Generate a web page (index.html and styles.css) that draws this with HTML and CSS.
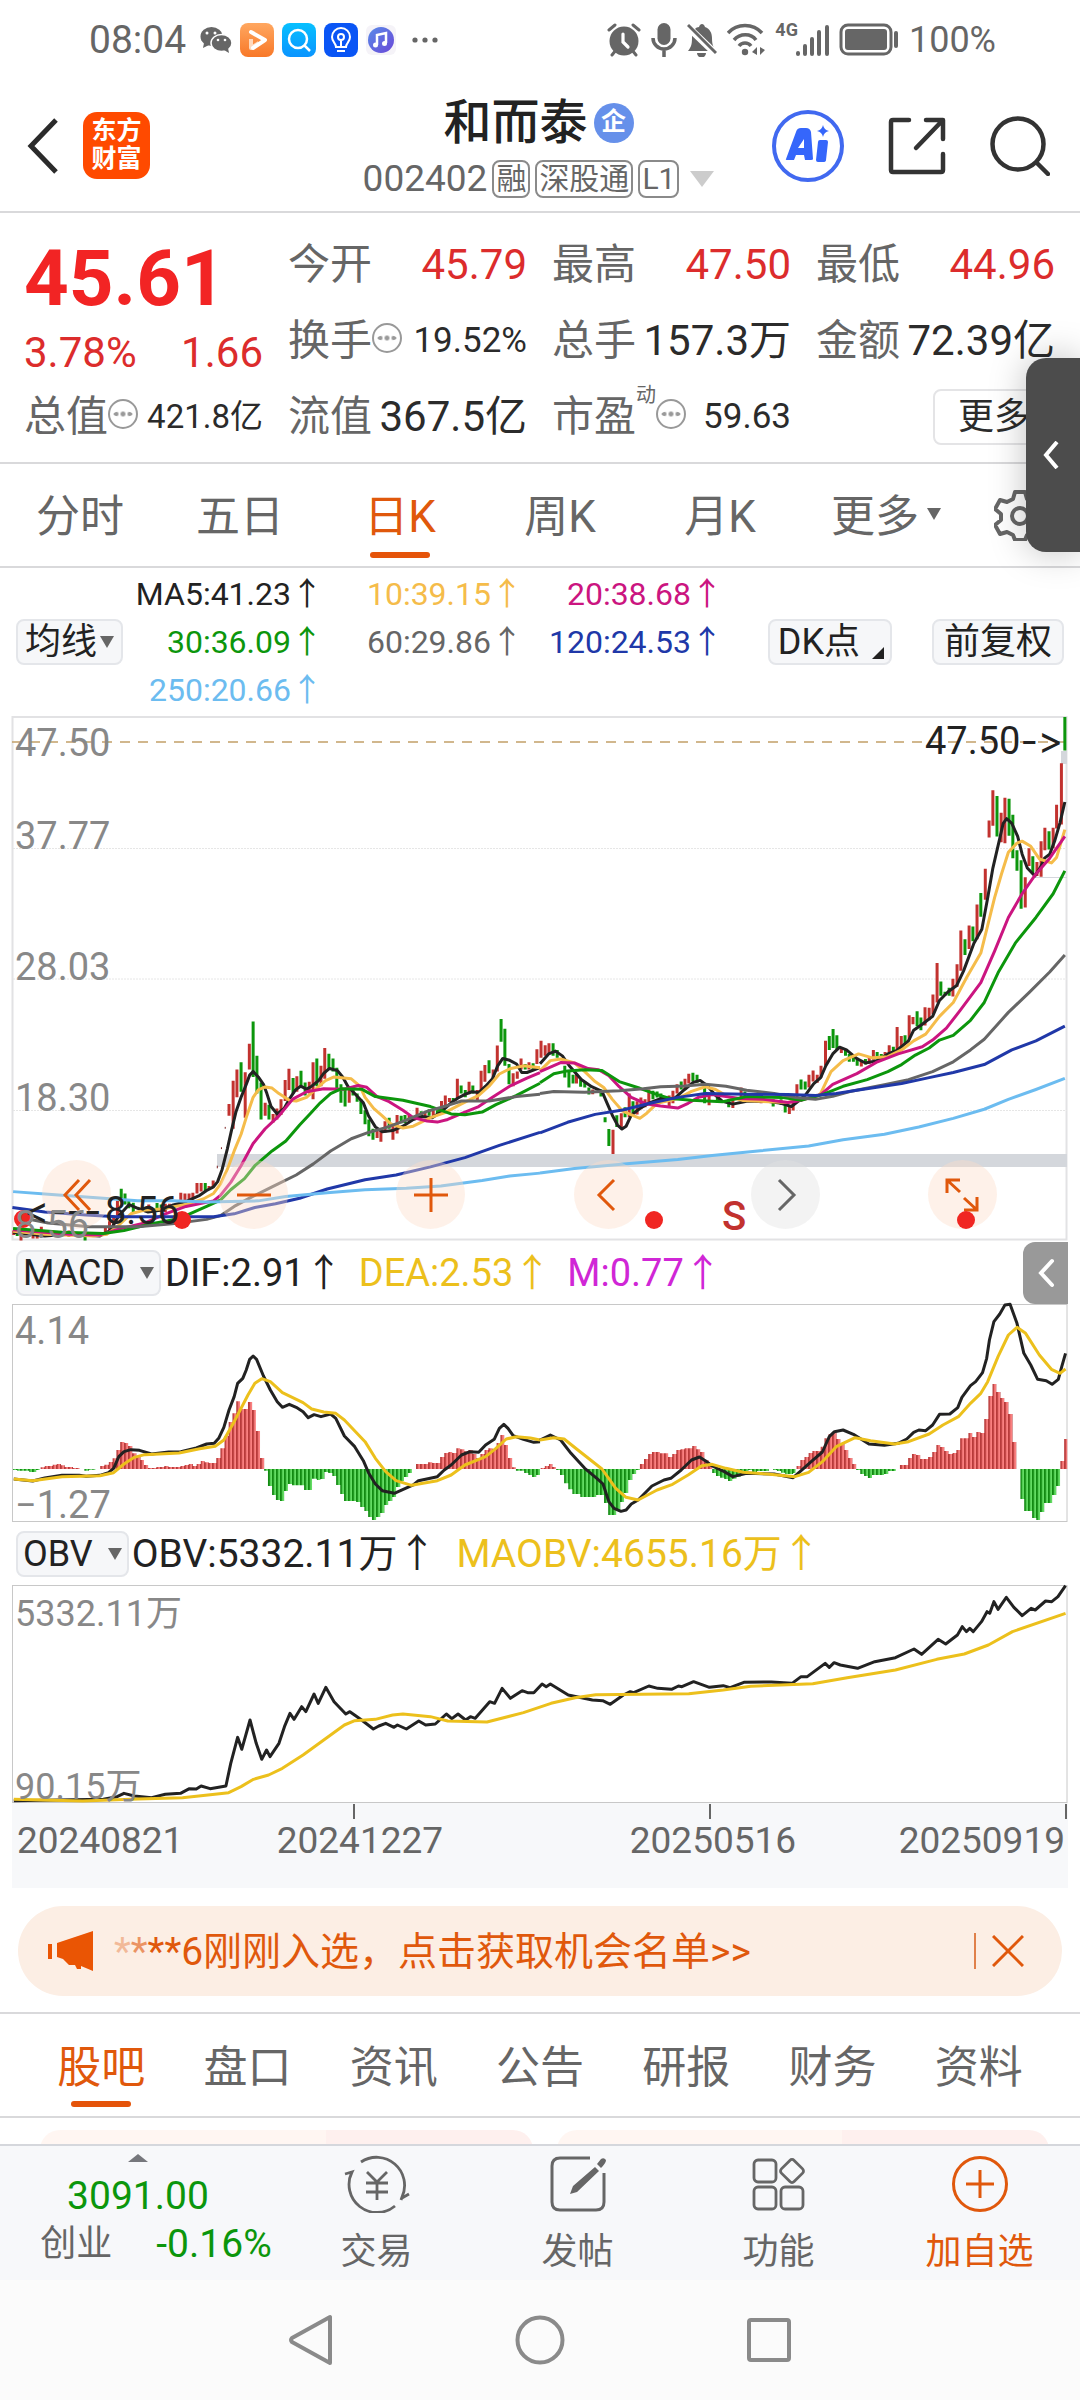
FILE: index.html
```html
<!DOCTYPE html>
<html lang="zh-CN">
<head>
<meta charset="utf-8">
<meta name="viewport" content="width=device-width, initial-scale=1">
<title>和而泰 002402</title>
<link rel="stylesheet" href="styles.css">
</head>
<body>
<div class="status">
  <div class="status__group">
    <span class="status__time">08:04</span>
    <svg width="32" height="36" viewBox="0 0 32 36"><ellipse cx="11.500" cy="14.500" rx="11" ry="9.500" fill="#666"/><path d="M4 21l-1 5 6-3z" fill="#666"/><ellipse cx="21.500" cy="21" rx="10.500" ry="8.500" fill="#666" stroke="#fff" stroke-width="1.500"/><path d="M24 28l5 3-1-5z" fill="#666"/><g fill="#fff"><circle cx="7" cy="11" r="1.500"/><circle cx="15" cy="11" r="1.500"/><circle cx="18" cy="18" r="1.300"/><circle cx="25" cy="18" r="1.300"/></g></svg>
    <svg width="34" height="34" viewBox="0 0 34 34"><defs><linearGradient id="or" x2="0" y2="1"><stop stop-color="#ffa760"/><stop offset="1" stop-color="#f87828"/></linearGradient></defs><rect width="34" height="34" rx="8" fill="url(#or)"/><path d="M11 16v9l8-5" stroke="#ffd9bd" stroke-width="4" fill="none" stroke-linejoin="round"/><path d="M11 9l14 8-12 8" fill="none" stroke="#fff" stroke-width="4" stroke-linejoin="round" stroke-linecap="round"/></svg>
    <svg width="34" height="34" viewBox="0 0 34 34"><defs><linearGradient id="cy" x2="0" y2="1"><stop stop-color="#07c0ff"/><stop offset="1" stop-color="#0a94ff"/></linearGradient></defs><rect width="34" height="34" rx="8" fill="url(#cy)"/><circle cx="16" cy="16" r="9" fill="none" stroke="#fff" stroke-width="2.500"/><path d="M22 22l6 6" stroke="#fff" stroke-width="2.500"/></svg>
    <svg width="34" height="34" viewBox="0 0 34 34"><rect width="34" height="34" rx="8" fill="#0a55f5"/><path d="M12 24c0-4-4-5-4-10a9 9 0 0 1 18 0c0 5-4 6-4 10zM13 28h8M17 24v-7M14 14a3 3 0 1 0 6 0 3 3 0 1 0-6 0" fill="none" stroke="#fff" stroke-width="2"/></svg>
    <svg class="status__music" width="30" height="30" viewBox="0 0 30 30"><defs><linearGradient id="mu" x2="1" y2="1"><stop stop-color="#5a8be8"/><stop offset="1" stop-color="#6a48d8"/></linearGradient></defs><rect width="30" height="30" rx="6" fill="#f5f3f8"/><circle cx="15" cy="15" r="13" fill="url(#mu)"/><path d="M11 20V10l9-2v10" fill="none" stroke="#fff" stroke-width="2.500"/><circle cx="9.500" cy="20" r="2.500" fill="#fff"/><circle cx="18.500" cy="18.500" r="2.500" fill="#fff"/></svg>
    <svg class="status__dots" width="26" height="8" viewBox="0 0 26 8" fill="#666"><circle cx="3" cy="4" r="2.600"/><circle cx="13" cy="4" r="2.600"/><circle cx="23" cy="4" r="2.600"/></svg>
  </div>
  <div class="status__group status__group--right">
    <svg width="34" height="34" viewBox="0 0 34 34"><circle cx="17" cy="18" r="14.500" fill="#666"/><path d="M2 7l6-5M32 7l-6-5M5 32l4-5M29 32l-4-5" stroke="#666" stroke-width="3" stroke-linecap="round"/><path d="M16 11v8l5 5" fill="none" stroke="#fff" stroke-width="3.200" stroke-linecap="round"/></svg>
    <svg width="26" height="36" viewBox="0 0 26 36"><rect x="6.500" y="1" width="13" height="22" rx="6.500" fill="#666"/><path d="M2 16a11 11 0 0 0 22 0M13 27v8" fill="none" stroke="#666" stroke-width="3.500"/></svg>
    <svg width="30" height="34" viewBox="0 0 30 34"><path d="M1 28c4-5 4-8 4-15 1-6 4-9 7-9 1-4 5-4 6 0 5 2 7 6 7 11 0 6 1 9 4 13z" fill="#666"/><path d="M1 4l28 27" stroke="#fff" stroke-width="7"/><path d="M1 2l28 28" stroke="#666" stroke-width="3"/><path d="M10 30h9a4 4 0 0 1-9 0" fill="#666"/></svg>
    <svg width="38" height="34" viewBox="0 0 38 34"><path d="M1 10c9-10 25-10 34 0M7 17c6-7 17-7 22 0M12 23c3-4 9-4 12 0" fill="none" stroke="#666" stroke-width="3.500"/><circle cx="18" cy="29" r="3.200" fill="#666"/><path d="M25 29l5-5v8M33 24v8l5-5z" fill="#666"/></svg>
    <span class="status__net">4G</span>
    <svg class="status__bars" width="33" height="34" viewBox="0 0 33 34" stroke="#666" stroke-width="4" stroke-linecap="round"><path d="M2 30v1M9 23v8M16 16v15M23 9v22M31 4v27"/></svg>
    <svg width="60" height="34" viewBox="0 0 60 34"><rect x="2" y="2" width="50" height="29" rx="7" fill="none" stroke="#666" stroke-width="3"/><rect x="6" y="6" width="42" height="21" rx="3" fill="#666"/><path d="M57 10v13" stroke="#666" stroke-width="4" stroke-linecap="round"/></svg>
    <span class="status__batt">100%</span>
  </div>
</div>

<header class="top">
  <div class="top__left">
    <button class="icon-btn" aria-label="返回"><svg width="32" height="56" viewBox="0 0 32 56"><path d="M29 2L4 28l25 26" fill="none" stroke="#2b2b2b" stroke-width="5"/></svg></button>
    <a class="brand" href="#">东方<br>财富</a>
  </div>
  <div class="top__mid">
    <h1 class="top__name">和而泰<span class="top__badge">企</span></h1>
    <div class="top__code"><span>002402</span><span class="tag">融</span><span class="tag">深股通</span><span class="tag">L1</span><svg class="top__tri" width="24" height="16" viewBox="0 0 24 16"><path d="M0 0h24L12 16z" fill="#ccc"/></svg></div>
  </div>
  <div class="top__right">
    <button class="icon-btn" aria-label="Ai"><svg width="72" height="72" viewBox="0 0 72 72"><circle cx="36" cy="36" r="34" fill="none" stroke="#4169f0" stroke-width="4"/><g fill="#3566fb"><path fill-rule="evenodd" d="M14 49l10-27q1-4 5-4h5q4 0 5 4l2 27q0 1-2 1h-6l-1-5h-8l-2 5h-7q-2 0-1-1zM26 38h6v-9z"/><path d="M46 32q0-2 2-2h6q2 0 2 2l-2 18q0 2-3 2h-5q-2 0-2-2zM51 15q1 5 6 6-5 1-6 6-1-5-6-6 5-1 6-6z"/></g></svg></button>
    <button class="icon-btn" aria-label="分享"><svg width="58" height="58" viewBox="0 0 58 58" fill="none" stroke="#333" stroke-width="4.500" stroke-linecap="round" stroke-linejoin="round"><path d="M21 3H5q-2 0-2 2v48q0 2 2 2h48q2 0 2-2V37M38 3h17v19M54 4L28 31"/></svg></button>
    <button class="icon-btn" aria-label="搜索"><svg width="60" height="60" viewBox="0 0 60 60" fill="none" stroke="#333" stroke-width="4.500" stroke-linecap="round"><circle cx="28" cy="28" r="25.500"/><path d="M47 47l11 11"/></svg></button>
  </div>
</header>

<section class="quote">
  <div class="quote__main">
    <div class="quote__price">45.61</div>
    <div class="quote__chg"><span>3.78%</span><span>1.66</span></div>
  </div>
  <div class="q"><span>今开</span><b class="up">45.79</b></div>
  <div class="q"><span>最高</span><b class="up">47.50</b></div>
  <div class="q"><span>最低</span><b class="up">44.96</b></div>
  <div class="q"><span>换手<i class="more"></i></span><b class="mid">19.52%</b></div>
  <div class="q"><span>总手</span><b>157.3万</b></div>
  <div class="q"><span>金额</span><b>72.39亿</b></div>
  <div class="q"><span>总值<i class="more"></i></span><b class="small">421.8亿</b></div>
  <div class="q"><span>流值</span><b>367.5亿</b></div>
  <div class="q"><span>市盈<sup>动</sup><i class="more"></i></span><b class="mid">59.63</b></div>
  <div class="q q--end"><button class="quote__more">更多</button></div>
</section>

<nav class="periods">
  <a href="#">分时</a><a href="#">五日</a><a href="#" class="on">日K</a><a href="#">周K</a><a href="#">月K</a>
  <a href="#" class="periods__more">更多<svg class="tri" width="14" height="12" viewBox="0 0 14 12"><path d="M0 0h14L7 12z" fill="#666"/></svg></a>
  <button class="icon-btn" aria-label="设置"><svg width="52" height="52" viewBox="0 0 52 52" fill="none" stroke="#666" stroke-width="4" stroke-linejoin="round"><path d="M21 3h10l2 7 6 3 7-2 5 9-6 5v6l6 5-5 9-7-2-6 3-2 5H21l-2-5-6-3-7 2-5-9 6-5v-6l-6-5 5-9 7 2 6-3z"/><circle cx="26" cy="27" r="8"/></svg></button>
</nav>
<aside class="drawer"><button class="icon-btn" aria-label="展开"><svg width="18" height="28" viewBox="0 0 18 28"><path d="M15 1L4 14l11 13" fill="none" stroke="#fff" stroke-width="4"/></svg></button></aside>

<section class="ma">
  <button class="chip chip--ma">均线<svg width="14" height="12" viewBox="0 0 14 12"><path d="M0 0h14L7 12z" fill="#666"/></svg></button>
  <ul class="ma__list">
    <li class="c-black">MA5:41.23<i>↑</i></li><li class="c-orange">10:39.15<i>↑</i></li><li class="c-pink">20:38.68<i>↑</i></li>
    <li class="c-green">30:36.09<i>↑</i></li><li class="c-gray">60:29.86<i>↑</i></li><li class="c-blue">120:24.53<i>↑</i></li>
    <li class="c-sky">250:20.66<i>↑</i></li>
  </ul>
  <button class="chip chip--dk">DK点<svg width="12" height="12" viewBox="0 0 12 12"><path d="M12 0v12H0z" fill="#222"/></svg></button>
  <button class="chip chip--fq">前复权</button>
</section>

<figure class="chart">
  <svg class="chart__svg" viewBox="12 716 1056 525">
    <rect x="12.500" y="717" width="1054" height="522.500" fill="none" stroke="#e2e2e4" stroke-width="2"/>
    <path d="M13 848.500H1067M13 979H1067M13 1110.500H1067" stroke="#e6e6e6" stroke-dasharray="2 1"/>
    <path d="M1033 877.500H1067" stroke="#d4d7dc"/>
    <path d="M217 1154H1067V1167H217zM1061 751h6v13h-6z" fill="#d4d7dc"/>
    <path d="M12 742H1067" stroke="#c2a068" stroke-width="1.500" stroke-dasharray="10 8"/>
    <g class="axis"><text x="15" y="756">47.50</text><text x="15" y="849">37.77</text><text x="15" y="980">28.03</text><text x="15" y="1111">18.30</text></g>
    <g class="candles" transform="translate(0 720) scale(.34439 .3699)">
      <path class="r" d="M40 1380V1392M61 1375V1407M96 1385V1402M108 1385V1402M120 1370V1395M200 1380V1397M212 1385V1393M306 1370V1390M318 1355V1385M330 1340V1375M341 1300V1340M432 1310V1330M480 1308V1330M492 1308V1320M525 1278V1300M537 1280V1300M549 1280V1298M560 1278V1292M572 1252V1280M584 1252V1275M607 1260V1268M619 1245V1262M665 1038V1070M677 975V1105M688 945V1020M712 952V1075M724 875V945M770 1035V1070M793 1065V1088M804 1050V1080M816 1025V1068M828 973V1030M839 943V1000M862 963V1005M898 978V1010M909 925V1025M932 935V990M943 887V970M1014 1000V1035M1095 1105V1130M1106 1110V1140M1118 1085V1115M1141 1095V1135M1153 1068V1118M1188 1065V1085M1211 1048V1080M1234 1060V1072M1258 1055V1075M1282 1030V1060M1293 1015V1045M1305 1022V1033M1328 970V1022M1362 978V1012M1386 1000V1030M1397 948V1005M1408 933V978M1432 945V970M1444 880V950M1490 955V990M1502 950V970M1513 915V945M1536 925V945M1559 890V930"/>
      <path class="g" d="M50 1385V1395M73 1380V1395M247 1385V1407M352 1267V1300M363 1280V1310M374 1298V1320M387 1305V1335M456 1306V1320M468 1310V1325M596 1252V1275M700 925V1005M735 815V965M746 908V1010M758 980V1080M781 1040V1080M851 968V1010M874 948V990M886 980V1015M920 915V990M955 902V945M967 915V950M978 940V1005M990 985V1035M1002 1000V1045M1025 990V1015M1037 1010V1032M1048 1025V1065M1060 1055V1093M1071 1080V1125M1083 1105V1135M1130 1075V1105M1165 1070V1090M1176 1068V1090M1223 1058V1070M1246 1052V1070M1270 1055V1070M1316 1022V1032M1339 988V1010M1351 1000V1020M1373 988V1010M1420 920V955M1455 808V870M1466 835V935M1478 930V985M1525 930V945M1548 928V948"/>
      <path class="thin" d="M631 1205V1212M643 1155V1160M654 1100V1105"/>
    </g>
    <g class="candles" transform="translate(540 700) scale(.34439 .39541)">
      <path class="r" d="M3 862V905M15 873V900M26 868V895M106 945V970M153 985V997M212 1087V1148M236 1045V1085M259 995V1055M282 1015V1048M293 1005V1035M305 1010V1030M316 985V1020M375 1000V1030M386 988V1020M398 972V995M421 958V985M432 945V970M491 1000V1025M560 1012V1032M584 980V1012M630 1000V1018M642 1000V1020M724 1025V1047M735 1015V1038M746 972V1005M781 948V980M793 937V965M805 948V968M816 925V955M829 862V925M875 880V893M933 912V927M956 905V920M968 885V910M1002 890V905M1014 873V895M1037 827V890M1049 850V880M1072 797V860M1083 802V820M1118 777V823M1130 778V810M1141 745V795M1153 665V765M1199 705V750M1211 668V725M1222 583V685M1246 570V630M1269 517V605M1293 427V505M1304 305V348M1315 228V318M1339 285V360M1350 247V362M1409 448V525M1420 375V420M1443 410V445M1455 357V447M1466 323V380M1490 323V375M1500 265V325M1514 160V315"/>
      <path class="g" d="M38 868V900M50 885V905M72 925V955M84 940V980M96 948V970M118 960V978M130 965V980M142 980V998M177 985V1003M189 1055V1068M200 1085V1128M223 1050V1080M247 1030V1055M270 1015V1045M328 988V1010M340 990V1005M351 995V1010M410 965V985M444 943V965M456 948V968M478 975V1020M515 1000V1018M548 1010V1030M595 990V1010M607 1000V1014M677 1010V1028M700 1010V1024M712 1020V1043M758 960V985M770 965V985M840 850V885M851 832V880M862 848V885M887 885V900M898 895V915M910 905V915M921 905V925M945 908V922M979 890V910M991 895V905M1026 877V895M1060 848V870M1095 787V825M1106 803V835M1164 712V748M1176 738V748M1188 728V748M1234 605V645M1257 573V610M1280 488V548M1327 243V345M1362 250V343M1373 290V400M1385 380V432M1397 405V528M1431 395V440M1478 332V378M1524 43V128"/>
    </g>
    <g class="lines" transform="translate(0 720) scale(.34439 .3699)">
      <polyline stroke="#222" points="38,1385 130,1395 200,1390 290,1395 320,1380 345,1340 375,1310 400,1320 430,1330 470,1325 500,1312 540,1302 580,1285 600,1272 620,1262 632,1248 645,1215 660,1160 672,1110 685,1060 700,1020 715,985 725,960 735,950 750,965 765,985 775,1010 787,1045 805,1065 825,1050 840,1025 858,1000 873,990 890,998 905,990 925,975 940,955 957,942 980,948 995,965 1010,990 1030,1010 1055,1035 1070,1070 1090,1100 1110,1113 1140,1110 1170,1098 1200,1080 1225,1072 1255,1075 1280,1060 1310,1035 1330,1022 1350,1012 1370,1005 1390,1007 1410,990 1430,970 1445,935 1460,915 1480,920 1500,930 1515,953 1530,953 1568,940"/>
      <polyline stroke="#f5bc4a" points="38,1382 130,1390 270,1395 310,1390 340,1370 380,1335 420,1325 470,1322 540,1310 590,1295 620,1280 640,1255 660,1215 680,1165 700,1120 715,1075 735,1020 750,1000 770,992 790,995 810,1010 840,1028 860,1030 890,1020 920,995 945,975 970,965 1020,970 1045,990 1060,1020 1085,1050 1110,1070 1135,1092 1170,1103 1200,1098 1250,1075 1290,1062 1340,1038 1390,1015 1420,990 1450,957 1480,943 1520,935 1568,940"/>
      <polyline stroke="#cb1580" points="38,1378 200,1390 290,1392 350,1375 420,1360 480,1335 540,1315 620,1300 640,1285 670,1250 700,1205 735,1145 770,1105 810,1070 850,1025 890,1005 940,997 1000,998 1040,988 1065,993 1095,1018 1130,1032 1170,1055 1200,1075 1240,1084 1270,1087 1300,1080 1350,1060 1390,1045 1430,1020 1480,990 1530,968 1568,953"/>
      <polyline stroke="#0c960c" points="38,1375 180,1385 300,1388 360,1380 440,1362 520,1348 600,1315 640,1298 670,1270 710,1240 740,1205 790,1165 830,1138 870,1095 900,1065 930,1035 960,1010 990,997 1050,998 1090,1018 1170,1028 1250,1045 1310,1065 1350,1067 1400,1060 1440,1040 1500,1015 1568,982"/>
      <polyline stroke="#666" points="60,1345 140,1360 260,1370 400,1370 500,1362 600,1350 640,1340 680,1315 730,1290 790,1262 860,1230 910,1200 960,1165 1020,1132 1070,1115 1120,1102 1170,1085 1240,1058 1300,1042 1340,1030 1420,1030 1500,1018 1568,1012"/>
      <polyline stroke="#2038a8" points="36,1318 130,1330 250,1338 340,1343 620,1343 680,1335 740,1318 800,1308 870,1293 950,1268 1060,1243 1150,1230 1250,1208 1350,1183 1450,1150 1568,1115"/>
      <polyline stroke="#6cbcf0" points="38,1275 150,1283 300,1293 400,1300 500,1300 600,1303 750,1300 830,1288 950,1278 1060,1270 1180,1266 1280,1260 1400,1245 1480,1233 1568,1225"/>
    </g>
    <g class="lines" transform="translate(540 700) scale(.34439 .39541)">
      <polyline stroke="#222" points="0,920 25,895 45,888 65,900 85,925 120,960 150,978 180,990 195,1020 210,1050 225,1075 238,1085 250,1078 265,1050 290,1033 320,1018 350,1008 390,1008 420,985 445,967 465,962 485,975 510,1000 530,1015 560,1022 600,1015 660,1015 700,1020 730,1028 745,1018 770,1000 795,970 815,955 830,925 850,895 870,878 890,885 920,907 945,918 980,912 1010,895 1035,887 1070,862 1085,835 1110,820 1140,800 1160,760 1185,738 1210,722 1230,685 1260,615 1283,580 1300,500 1315,425 1335,350 1345,312 1355,300 1370,312 1387,345 1400,390 1415,425 1437,445 1455,420 1465,400 1480,390 1495,355 1510,310 1524,258"/>
      <polyline stroke="#f5bc4a" points="0,938 30,912 60,908 100,918 130,940 160,965 185,980 210,1010 240,1040 290,1058 310,1045 340,1020 400,1008 440,990 480,978 510,985 545,1003 590,1013 640,1015 720,1018 760,1008 800,1005 815,995 845,940 880,912 925,895 965,905 1010,902 1050,885 1085,862 1120,845 1160,800 1200,765 1240,700 1280,640 1300,570 1320,500 1340,440 1360,385 1385,362 1400,357 1425,370 1450,402 1485,412 1500,398 1524,328"/>
      <polyline stroke="#cb1580" points="0,940 60,917 100,918 140,932 170,935 200,950 230,978 265,1005 310,1022 350,1027 400,1032 430,1020 460,1005 500,998 580,1008 650,1010 720,1018 760,1012 815,998 850,972 920,945 980,915 1040,895 1110,877 1140,860 1180,830 1220,785 1280,715 1320,635 1360,550 1400,490 1440,440 1480,400 1524,345"/>
      <polyline stroke="#0c960c" points="0,968 40,945 80,938 130,935 180,937 230,965 290,982 340,998 380,1008 440,1012 530,1016 600,1003 700,1005 760,1012 820,998 880,977 950,960 1010,940 1050,922 1090,898 1130,880 1160,860 1200,848 1250,810 1290,765 1330,690 1380,615 1440,550 1490,490 1524,432"/>
      <polyline stroke="#666" points="0,995 40,990 130,992 230,988 300,983 350,978 420,976 480,972 540,977 600,987 680,995 740,1005 800,1010 850,1002 900,990 1000,973 1070,960 1140,940 1200,915 1250,885 1290,858 1360,790 1420,740 1480,688 1524,645"/>
      <polyline stroke="#2038a8" points="0,1095 80,1068 160,1048 240,1037 320,1020 400,1005 480,995 600,997 720,998 800,1000 860,995 920,987 1050,970 1130,955 1200,942 1290,922 1370,885 1440,862 1524,825"/>
      <polyline stroke="#6cbcf0" points="0,1196 100,1185 260,1172 400,1162 500,1152 640,1140 780,1128 880,1112 1000,1098 1100,1080 1200,1058 1290,1035 1360,1010 1440,985 1524,957"/>
    </g>
    <text class="mark" x="1063" y="754" text-anchor="end">47.50<tspan class="mark__arrow">-&gt;</tspan></text>
  </svg>
  <div class="chart__tools">
    <button class="round" aria-label="最左"><svg width="34" height="34" viewBox="0 0 34 34"><path d="M19 2L5 17l14 15M30 2L16 17l14 15"/></svg></button>
    <button class="round" aria-label="缩小"><svg width="34" height="34" viewBox="0 0 34 34"><path d="M0 17h34"/></svg></button>
    <button class="round" aria-label="放大"><svg width="34" height="34" viewBox="0 0 34 34"><path d="M0 17h34M17 0v34"/></svg></button>
    <button class="round" aria-label="左移"><svg width="34" height="34" viewBox="0 0 34 34"><path d="M23 2L8 17l15 15"/></svg></button>
    <button class="round round--off" aria-label="右移"><svg width="34" height="34" viewBox="0 0 34 34"><path d="M11 2l15 15-15 15"/></svg></button>
    <button class="round" aria-label="全屏"><svg width="34" height="34" viewBox="0 0 34 34"><path d="M15 2H2v13M2 2l13 12M19 32h13V19M32 32L19 20"/></svg></button>
  </div>
  <svg class="chart__svg chart__marks" viewBox="12 716 1056 525">
    <g fill="#f02622"><circle cx="23" cy="1219" r="9"/><circle cx="182" cy="1220" r="9"/><circle cx="654" cy="1220" r="9"/><circle cx="966" cy="1220" r="9"/></g>
    <text class="mark" x="105" y="1224">8.56</text>
    <text class="mark mark__arrow" x="24" y="1224">&lt;---</text>
    <text class="axis" x="15" y="1238">8.56</text>
    <text class="sell" x="722" y="1230">S</text>
  </svg>
</figure>

<div class="legend">
  <button class="chip chip--ind">MACD<svg width="14" height="12" viewBox="0 0 14 12"><path d="M0 0h14L7 12z" fill="#666"/></svg></button>
  <span class="c-black">DIF:2.91<i>↑</i></span><span class="c-gold">DEA:2.53<i>↑</i></span><span class="c-mag">M:0.77<i>↑</i></span>
  <button class="legend__fold" aria-label="收起"><svg width="18" height="30" viewBox="0 0 18 30"><path d="M15 3L4 15l11 12" fill="none" stroke="#fff" stroke-width="4" stroke-linecap="round"/></svg></button>
</div>
<figure class="chart">
  <svg class="chart__svg" viewBox="12 1304 1056 218">
    <defs>
      <pattern id="pr" patternUnits="userSpaceOnUse" width="11.615" height="900"><rect width="11.615" height="900" fill="#fa8080"/><rect width="5.800" height="900" fill="#b83a3a"/></pattern>
      <pattern id="pg" patternUnits="userSpaceOnUse" width="11.615" height="900"><rect width="11.615" height="900" fill="#63dc63"/><rect width="5.800" height="900" fill="#128a12"/></pattern>
    </defs>
    <rect x="12.500" y="1304.500" width="1054.500" height="217" fill="none" stroke="#c8c8c8"/>
    <g class="axis"><text x="15" y="1344">4.14</text><text x="15" y="1518">−1.27</text></g>
    <g transform="translate(0 1240) scale(.34439 .33333)">
      <path fill="url(#pr)" d="M118 687V682H130V678H153V674H165V672H177V676H188V681H212V684H231V687ZM291 687V678H303V674H316V666H327V655H338V630H349V606H361V609H372V618H384V640H396V650H408V660H418V675H430V684H454V681H477V678H489V681H524V678H536V675H548V672H560V678H571V672H583V663H594V667H606V669H628V654H640V625H652V588H664V546H675V520H686V484H697V507H720V486H732V510H743V573H755V654H767V687ZM1208 687V672H1243V667H1255V669H1278V651H1290V639H1302V636H1313V639H1325V625H1336V628H1348V634H1360V630H1372V642H1383V655H1395V642H1407V630H1418V625H1430V627H1442V609H1453V585H1464V615H1475V654H1487V682H1498V687Z"/>
      <path fill="url(#pg)" d="M38 687V690H50V692H85V696H105V690H115V687ZM245 687V692H258V689H277V687ZM767 687V692H778V738H790V765H801V780H813V783H825V753H836V732H848V736H883V750H906V716H920V720H930V717H942V696H953V699H965V708H976V735H988V762H999V783H1034V786H1046V801H1058V813H1069V831H1080V840H1092V831H1104V819H1116V795H1127V783H1139V771H1150V741H1162V723H1173V711H1185V699H1196V687ZM1498 687V692H1522V699H1534V705H1545V711H1557V705H1568V687Z"/>
      <g class="lines"><polyline stroke="#222" points="40,717 95,723 130,714 180,706 230,706 250,709 290,706 315,698 330,685 345,650 360,635 380,629 405,631 440,642 490,636 525,635 570,624 600,612 622,610 635,595 650,562 665,510 680,470 690,430 705,415 715,390 725,358 735,348 745,358 765,408 785,450 805,485 820,502 840,493 860,502 880,515 895,533 912,524 932,530 960,522 975,535 1000,588 1030,620 1055,662 1070,698 1090,732 1110,752 1145,760 1200,735 1215,722 1270,710 1290,690 1310,675 1340,645 1365,635 1390,637 1410,615 1435,598 1450,565 1463,553 1475,565 1490,587 1520,598 1550,607 1568,605"/>
      <polyline stroke="#ecc01c" points="40,717 95,722 180,710 290,707 330,698 360,672 390,652 420,644 520,639 580,626 625,619 650,600 680,545 720,465 740,430 760,416 785,425 820,458 880,488 905,507 940,516 975,520 1000,540 1060,605 1090,655 1120,695 1150,722 1195,736 1270,722 1310,705 1350,675 1410,650 1440,625 1470,597 1500,590 1540,594 1568,600"/></g>
    </g>
    <g transform="translate(540 1240) scale(.34439 .33333)">
      <path fill="url(#pr)" d="M2 687V684H14V678H26V672H36V681H46V687ZM290 687V672H302V657H314V642H325V636H348V640H372V651H384V642H396V630H408V628H420V625H442V618H454V628H465V636H477V660H489V672H500V687ZM745 687V678H756V660H768V651H780V639H791V633H815V620H826V595H838V582H850V579H861V597H872V610H884V630H895V654H907V672H918V687ZM1045 687V675H1069V654H1080V642H1092V645H1104V657H1127V651H1139V636H1151V615H1162V621H1174V633H1186V642H1198V639H1209V630H1220V595H1244V579H1255V591H1267V576H1279V579H1290V537H1302V468H1314V432H1325V456H1337V474H1348V486H1360V522H1372V606H1383V687ZM1511 687V663H1522V597H1531V687Z"/>
      <path fill="url(#pg)" d="M47 687V690H58V705H70V730H82V748H94V762H117V771H163V765H186V789H198V825H221V810H233V786H244V759H256V720H268V702H279V690H290V687ZM500 687V699H511V708H523V713H535V717H546V723H558V716H570V711H582V702H595V693H605V690H616V696H630V693H664V687ZM677 687V690H688V693H700V698H712V702H735V699H742V687ZM918 687V690H930V702H941V708H952V714H964V705H999V702H1011V693H1033V687ZM1395 687V777H1406V813H1429V834H1441V840H1452V816H1464V789H1487V765H1499V738H1510V687Z"/>
      <g class="lines"><polyline stroke="#222" points="0,600 30,585 60,600 90,640 130,685 165,715 183,732 200,785 215,805 235,814 250,810 265,792 285,780 325,738 360,720 380,715 410,690 440,660 463,651 480,662 500,678 535,695 560,710 600,700 680,702 735,713 755,695 790,663 820,636 840,590 855,575 880,570 910,583 955,612 1000,616 1040,610 1065,597 1085,577 1100,570 1120,572 1140,555 1160,523 1190,522 1213,503 1225,472 1250,437 1265,425 1285,398 1297,355 1305,300 1318,245 1335,222 1350,195 1365,193 1385,250 1405,340 1425,375 1445,418 1470,422 1487,433 1505,418 1515,380 1526,340"/>
      <polyline stroke="#ecc01c" points="0,600 40,593 70,597 110,630 180,687 220,745 250,772 285,780 340,750 385,733 430,705 470,677 500,673 540,685 590,697 660,702 740,710 780,697 820,665 860,620 915,593 960,602 1030,612 1070,605 1130,582 1170,555 1215,530 1250,490 1280,460 1300,425 1330,350 1360,285 1385,262 1410,280 1450,345 1485,388 1510,400 1526,387"/></g>
    </g>
  </svg>
</figure>

<div class="legend legend--obv">
  <button class="chip chip--ind">OBV<svg width="14" height="12" viewBox="0 0 14 12"><path d="M0 0h14L7 12z" fill="#666"/></svg></button>
  <span class="c-black">OBV:5332.11万<i>↑</i></span><span class="c-gold">MAOBV:4655.16万<i>↑</i></span>
</div>
<figure class="chart">
  <svg class="chart__svg" viewBox="12 1585 1056 218">
    <rect x="12.500" y="1585.500" width="1054.500" height="217" fill="none" stroke="#c8c8c8"/>
    <g class="lines" transform="translate(0 1530) scale(.68878 .33333)">
      <polyline stroke="#222" points="20,812 150,808 170,800 180,790 195,798 220,803 240,793 262,790 275,776 285,777 292,768 305,776 328,768 335,700 345,622 351,658 363,570 372,640 380,688 387,660 392,680 405,640 413,590 421,550 427,568 438,530 444,545 456,492 462,520 473,472 485,515 502,552 508,545 525,570 542,597 550,588 560,580 572,592 577,585 590,597 608,573 618,585 632,582 648,552 656,566 665,552 676,570 683,560 690,565 711,515 718,520 729,475 741,505 758,482 766,488 775,488 787,462 793,470 799,462 825,495 860,510 875,512 886,523 905,495 915,485 920,488 942,468 955,475 975,478 985,468 990,470 1007,455 1030,472 1050,467 1060,473 1080,457 1120,456 1150,460 1163,440 1172,440 1198,400 1204,412 1211,398 1220,405 1245,415 1270,395 1300,383 1327,357 1338,373 1362,328 1373,342 1390,315 1397,290 1403,305 1408,295 1413,305 1425,275 1433,245 1437,250 1443,215 1449,238 1461,202 1472,232 1484,257 1497,235 1503,240 1518,213 1527,215 1536,200 1547,167"/>
      <polyline stroke="#ecc01c" points="20,808 120,813 200,807 265,803 332,788 350,770 368,748 390,735 410,715 440,675 470,630 500,585 515,572 545,568 570,555 585,552 625,560 650,573 707,576 760,548 800,520 835,503 865,494 1000,491 1050,480 1090,469 1180,461 1230,443 1300,420 1360,388 1400,372 1435,345 1470,305 1547,250"/>
    </g>
    <g class="axis axis--obv"><text x="15" y="1626">5332.11万</text><text x="15" y="1799">90.15万</text></g>
  </svg>
  <figcaption class="dates">
    <svg class="dates__ticks" viewBox="0 0 1056 16"><path d="M342 1v15M698 1v15M1054 1v15" stroke="#666" stroke-width="2"/></svg>
    <div class="dates__row"><span>20240821</span><span>20241227</span><span>20250516</span><span>20250919</span></div>
  </figcaption>
</figure>

<section class="banner">
  <svg width="46" height="40" viewBox="0 0 46 40" fill="#ea5504"><path d="M0 13h4v15H0zM9 12L45 0v40l-12-5v3l-4 0-2-4-6 0-6-6-6-2z"/></svg>
  <a class="banner__text" href="#"><span class="fade1">*</span><span class="fade2">*</span>**6刚刚入选，点击获取机会名单&gt;&gt;</a>
  <button class="banner__close" aria-label="关闭"><svg width="32" height="32" viewBox="0 0 32 32"><path d="M1 1l30 30M31 1L1 31" stroke="#e0580c" stroke-width="3"/></svg></button>
</section>

<nav class="tabs">
  <a href="#" class="on">股吧</a><a href="#">盘口</a><a href="#">资讯</a><a href="#">公告</a><a href="#">研报</a><a href="#">财务</a><a href="#">资料</a>
</nav>
<div class="peek"><div class="peek__card"></div><div class="peek__card"></div></div>

<footer class="actions">
  <button class="idx">
    <svg class="idx__tri" width="20" height="8" viewBox="0 0 20 8"><path d="M0 8L10 0l10 8z" fill="#76777c"/></svg>
    <span class="idx__val">3091.00</span>
    <span class="idx__row"><span>创业</span><span class="idx__pct">-0.16%</span></span>
  </button>
  <button class="act"><svg width="66" height="58" viewBox="0 0 66 58" fill="none" stroke="#666" stroke-width="2.800"><path d="M17 7A28 28 0 0 1 58 42L57 45M51 51A28 28 0 0 1 8 17L1 19M58 43l7-4"/><path d="M23 17l10 10 10-10M33 27v18M22 28h22M22 37h22"/></svg><span>交易</span></button>
  <button class="act"><svg width="58" height="58" viewBox="0 0 58 58"><path d="M41 3H11Q3 3 3 11V47Q3 55 11 55H47Q55 55 55 47V18" fill="none" stroke="#666" stroke-width="3"/><path d="M46 12l4 4-22 21-7 2 3-8zM48 9l4-5q3-2 5 1 0 3-5 8z" fill="#666"/></svg><span>发帖</span></button>
  <button class="act"><svg width="56" height="58" viewBox="0 0 56 58" fill="none" stroke="#666" stroke-width="2.800" stroke-linejoin="round"><rect x="3" y="5" width="22" height="22" rx="4"/><rect x="3" y="32" width="22" height="22" rx="4"/><rect x="30" y="32" width="22" height="22" rx="4"/><rect x="32" y="7" width="18" height="18" rx="3" transform="rotate(45 41 16)"/></svg><span>功能</span></button>
  <button class="act act--add"><svg width="58" height="58" viewBox="0 0 58 58" fill="none" stroke="#e0580c" stroke-width="3"><circle cx="29" cy="29" r="26.500"/><path d="M15 29h28M29 15v28"/></svg><span>加自选</span></button>
</footer>
<nav class="sysnav">
  <button class="icon-btn" aria-label="后退"><svg width="46" height="52" viewBox="0 0 46 52"><path d="M42 3v46L4 28q-2-2 0-4z" fill="none" stroke="#8a8a8a" stroke-width="4" stroke-linejoin="round"/></svg></button>
  <button class="icon-btn" aria-label="主页"><svg width="50" height="50" viewBox="0 0 50 50"><circle cx="25" cy="25" r="22.500" fill="none" stroke="#8a8a8a" stroke-width="4"/></svg></button>
  <button class="icon-btn" aria-label="最近"><svg width="46" height="46" viewBox="0 0 46 46"><rect x="3" y="3" width="40" height="40" rx="2" fill="none" stroke="#8a8a8a" stroke-width="4"/></svg></button>
</nav>
</body>
</html>
```
FILE: styles.css
```css
* { box-sizing: border-box; }
body {
  margin: 0;
  position: relative;
  background: #fff;
  color: #666;
  font-family: Roboto, "Noto Sans CJK SC", sans-serif;
  font-size: 42px;
}
button { font: inherit; color: inherit; border: 0; background: none; padding: 0; margin: 0; }
a { color: inherit; text-decoration: none; }
svg { display: block; flex: none; }
i { font-style: normal; }
ul, figure, h1 { margin: 0; padding: 0; list-style: none; }
.icon-btn { display: flex; }

.c-black { color: #222; }
.c-orange { color: #f5bc4a; }
.c-pink { color: #cb1580; }
.c-green { color: #0c960c; }
.c-gray { color: #666; }
.c-blue { color: #2038a8; }
.c-sky { color: #6cbcf0; }
.c-gold { color: #ecc01c; }
.c-mag { color: #d026d6; }

/* system status bar */
.status { display: flex; justify-content: space-between; height: 80px; padding: 0 84px 0 89px; }
.status__group { display: flex; align-items: center; gap: 8px; line-height: 80px; }
.status__group--right { gap: 10px; }
.status__time { font-size: 39px; padding-right: 6px; }
.status__batt { font-size: 36px; }
.status__dots { margin-left: 8px; }
.status__net { font-size: 18px; font-weight: 700; line-height: 20px; align-self: flex-start; padding-top: 20px; }
.status__bars { margin-left: -12px; }

/* title bar */
.top {
  display: grid;
  grid-template-columns: 1fr auto 1fr;
  align-items: center;
  height: 133px;
  padding: 0 30px 0 27px;
  border-bottom: 2px solid #d9d9db;
}
.top__left, .top__right { display: flex; align-items: center; gap: 24px; }
.top__right { justify-content: flex-end; gap: 44px; }
.top__mid { padding-top: 6px; }
.brand {
  width: 67px; height: 67px;
  padding-top: 5px;
  border-radius: 14px;
  background: #ff4a00;
  color: #fff;
  font-size: 25px; font-weight: 700; line-height: 28px;
  text-align: center;
}
.top__name { display: flex; align-items: center; justify-content: center; gap: 6px; font-size: 48px; font-weight: 500; line-height: 60px; color: #222; }
.top__badge { width: 40px; height: 40px; border-radius: 50%; background: #6690ea; color: #fff; font-size: 25px; font-weight: 700; line-height: 38px; text-align: center; }
.top__code { display: flex; align-items: center; gap: 5px; font-size: 37px; line-height: 52px; }
.tag { border: 2px solid #8a8a8a; border-radius: 8px; font-size: 30px; line-height: 34px; padding: 0 2px; }
.top__tri { margin-left: 6px; }

/* quote figures */
.quote {
  display: grid;
  grid-template-columns: repeat(4, 1fr);
  grid-auto-rows: 76px;
  column-gap: 25px;
  padding: 14px 25px 7px 24px;
  border-bottom: 2px solid #d9d9db;
}
.quote__main { grid-row: span 2; padding-top: 10px; color: #dc2c2c; }
.quote__price { color: #f22424; font-size: 78px; font-weight: 700; line-height: 84px; }
.quote__chg { display: flex; justify-content: space-between; margin-top: 8px; line-height: 48px; }
.q { display: flex; justify-content: space-between; align-items: center; line-height: 76px; white-space: nowrap; }
.q > span { display: flex; align-items: center; }
.q b { font-weight: 400; color: #2b2b2b; }
.q b.up { color: #dc2c2c; }
.q .mid { font-size: 35px; }
.q .small { font-size: 33px; }
.q sup { font-size: 20px; line-height: 24px; align-self: flex-start; padding-top: 4px; }
.more {
  width: 30px; height: 30px;
  margin-bottom: 6px;
  border: 2px solid #999; border-radius: 50%;
  background: radial-gradient(circle, #999 2px, transparent 3px) center / 7px 7px repeat-x content-box;
  padding: 10px 3px;
}
.q--end { justify-content: flex-end; }
.quote__more { width: 122px; height: 56px; border: 2px solid #e4e4e6; border-radius: 8px; font-size: 36px; line-height: 50px; color: #2b2b2b; }

/* period tabs */
.periods {
  display: grid;
  grid-template-columns: repeat(6, 4fr) 3fr;
  align-items: center;
  height: 104px;
  border-bottom: 2px solid #d9d9db;
  font-size: 44px; line-height: 102px;
  text-align: center;
}
.periods a { height: 102px; padding-top: 2px; }
.periods .periods__more { padding-left: 12px; }
.periods .icon-btn { justify-content: center; }
.periods a, .tabs a { position: relative; }
.tri { display: inline-block; margin: 0 0 12px 8px; }
.on { color: #e0580c; }
.on::after {
  content: "";
  position: absolute; left: 50%; bottom: 8px;
  width: 60px; height: 6px; margin-left: -30px;
  border-radius: 3px;
  background: #e5540a;
}
.drawer {
  position: absolute; top: 358px; right: 0;
  display: flex; align-items: center; justify-content: flex-end;
  width: 54px; height: 194px; padding-right: 20px;
  border-radius: 20px 0 0 20px;
  background: #4c4c4c;
  box-shadow: 0 0 36px rgba(0, 0, 0, .25);
}

/* moving averages */
.ma { display: flex; align-items: center; height: 148px; padding: 0 16px; }
.chip {
  display: flex; align-items: center; gap: 5px;
  height: 46px; padding: 0 8px;
  border: 2px solid #e4e6ea; border-radius: 8px;
  background: #f6f7f9;
  color: #222;
  font-size: 36px; line-height: 40px; white-space: nowrap;
}
.chip--ma { gap: 3px; padding: 0 7px; }
.ma__list { flex: 1; display: grid; grid-template-columns: 1fr 1fr 1fr; max-width: 600px; margin-right: auto; font-size: 32px; line-height: 48px; text-align: right; }
.chip--dk { margin-right: 40px; padding-right: 6px; gap: 12px; }
.chip--dk svg { align-self: flex-end; margin-bottom: 4px; }
.chip--fq { padding: 0 10px; }

/* charts */
.chart { position: relative; margin: 0 12px; }
.chart__svg { width: 100%; overflow: visible; }
.axis { font-size: 38px; fill: #888; }
.axis--obv { font-size: 36px; }
.candles path { fill: none; vector-effect: non-scaling-stroke; stroke-width: 3; }
.candles .r { stroke: #c2322f; }
.candles .g { stroke: #0c960c; }
.candles .thin { stroke: #7a2020; stroke-width: 1; }
.lines { fill: none; stroke-linejoin: round; }
.lines polyline { vector-effect: non-scaling-stroke; stroke-width: 3; }
.mark { font-size: 38px; fill: #222; }
.mark__arrow { font-family: Inter, sans-serif; font-feature-settings: "calt" 0, "liga" 0; }
.sell { font-size: 40px; font-weight: 500; fill: #c2322f; }
.chart__marks { position: absolute; left: 0; top: 0; pointer-events: none; }
.chart__tools { position: absolute; left: 30px; right: 71px; bottom: 12px; display: flex; justify-content: space-between; }
.round { display: flex; align-items: center; justify-content: center; width: 69px; height: 69px; border-radius: 50%; background: rgba(253, 220, 200, .4); stroke: #e0580c; stroke-width: 3; fill: none; }
.round--off { background: rgba(225, 225, 225, .4); stroke: #666; }

.legend { display: flex; align-items: center; height: 63px; padding: 0 12px 0 16px; font-size: 38px; gap: 16px; line-height: 60px; }
.legend--obv { font-size: 39px; gap: 20px; }
.chip--ind { font-size: 36px; margin-right: -12px; gap: 15px; padding: 0 5px; }
.legend--obv .chip--ind { margin-right: -17px; }
.legend__fold { display: flex; align-items: center; justify-content: center; width: 45px; height: 62px; margin-left: auto; border-radius: 12px 0 0 12px; background: #999; }

.dates { height: 85px; background: #f7f8fa; }
.dates__ticks { width: 100%; }
.dates__row { display: grid; grid-template-columns: 164fr 356fr 356fr 180fr; font-size: 37px; line-height: 44px; text-align: center; }
.dates__row span:first-child { text-align: left; padding-left: 5px; }
.dates__row span:last-child { text-align: right; padding-right: 3px; }

/* notice */
.banner { display: flex; align-items: center; height: 90px; margin: 18px 18px 16px; padding: 0 38px 0 30px; border-radius: 45px; background: #fceee4; color: #e0580c; }
.banner__text { margin-left: 20px; padding-bottom: 6px; font-size: 39px; white-space: nowrap; }
.fade1 { opacity: .35; }
.fade2 { opacity: .6; }
.banner__close { display: flex; align-items: center; height: 36px; margin-left: auto; padding-left: 16px; border-left: 2px solid #e0804a; }

.tabs { display: grid; grid-template-columns: repeat(7, 1fr); height: 106px; padding: 0 28px; border: solid #d9d9db; border-width: 2px 0; font-size: 44px; line-height: 108px; text-align: center; }
.tabs .on::after { bottom: 9px; }
.tabs a { height: 102px; }
.peek { display: flex; gap: 24px; height: 26px; padding: 12px 31px 0 40px; overflow: hidden; }
.peek__card { flex: 1; height: 60px; border-radius: 20px; background: linear-gradient(90deg, #fff6f2 58%, #fef0ee 58%); }

/* bottom bar */
.actions { display: grid; grid-template-columns: 276fr repeat(4, 201fr); height: 136px; border-top: 2px solid #d5d7dc; background: #f7f8fa; font-size: 36px; }
.idx { display: flex; flex-direction: column; align-items: center; padding-top: 8px; color: #0c960c; }
.idx__val { font-size: 39px; line-height: 48px; margin-top: 10px; }
.idx__row { display: flex; gap: 44px; line-height: 48px; padding-left: 36px; }
.idx__row > span:first-child { color: #666; }
.idx__pct { font-size: 39px; }
.act { display: flex; flex-direction: column; align-items: center; padding-top: 9px; line-height: 48px; }
.act span { margin-top: 15px; }
.act--add { color: #e0580c; }
.sysnav { display: flex; justify-content: center; align-items: center; gap: 181px; height: 120px; background: #fbfbfb; }
```
